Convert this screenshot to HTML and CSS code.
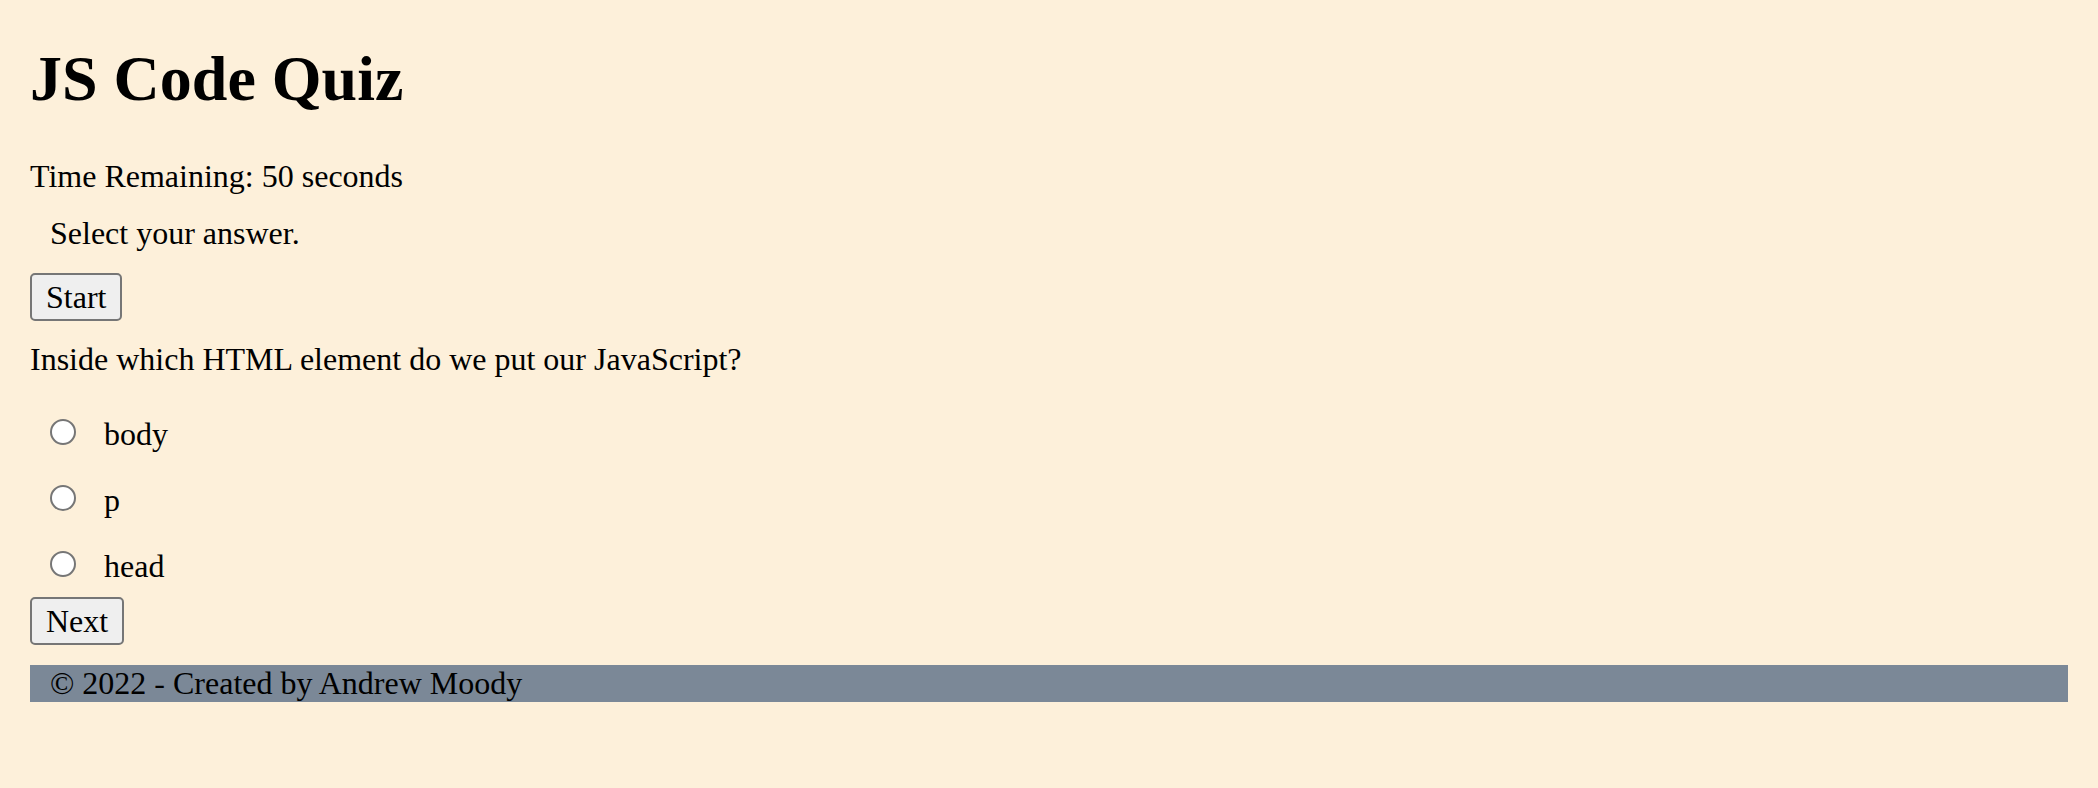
FILE: index.html
```html
<!DOCTYPE html>
<html lang="en">
<head>
<meta charset="utf-8">
<title>JS Code Quiz</title>
<link rel="stylesheet" href="styles.css">
</head>
<body>
<header>
<h1 class="title">JS Code Quiz</h1>
</header>
<main>
<p class="timer">Time Remaining: 50 seconds</p>
<p class="hint">Select your answer.</p>
<button class="button" type="button">Start</button>
<form class="quiz">
<p class="question">Inside which HTML element do we put our JavaScript?</p>
<div class="choice"><input class="radio" type="radio" name="answer" id="a1"><label for="a1">body</label></div>
<div class="choice"><input class="radio" type="radio" name="answer" id="a2"><label for="a2">p</label></div>
<div class="choice"><input class="radio" type="radio" name="answer" id="a3"><label for="a3">head</label></div>
<button class="button" type="button">Next</button>
</form>
</main>
<footer class="footer">© 2022 - Created by Andrew Moody</footer>
</body>
</html>
```
FILE: styles.css
```css
body {
  margin: 0;
  padding: 42px 30px;
  background: #fdf0da;
  color: #000;
  font-family: "Liberation Serif", "Times New Roman", serif;
  font-size: 32px;
  line-height: 37px;
}
.title {
  margin: 0 0 42px;
  font-size: 64px;
  line-height: 74px;
}
.timer {
  margin: 0 0 20px;
}
.hint {
  margin: 0 0 21px 20px;
}
.button {
  display: block;
  box-sizing: border-box;
  height: 48px;
  padding: 0 14px;
  border: 2px solid #767676;
  border-radius: 5px;
  background: #efefef;
  color: #000;
  font: inherit;
}
.question {
  margin: 20px 0 38px;
}
.choice {
  display: flex;
  align-items: center;
  margin: 0 0 29px 20px;
}
.choice:last-of-type {
  margin-bottom: 12px;
}
.radio {
  appearance: none;
  box-sizing: border-box;
  width: 26px;
  height: 26px;
  margin: 0 28px 5px 0;
  border: 2px solid #767676;
  border-radius: 50%;
  background: #fff;
}
.footer {
  margin-top: 20px;
  padding-left: 20px;
  background: #7b8897;
}
```
